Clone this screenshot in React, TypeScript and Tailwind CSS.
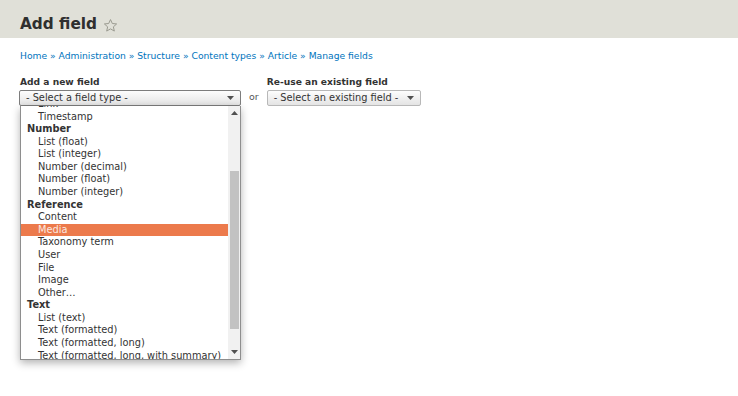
type Item = { label: string; group?: boolean; active?: boolean };

const ITEMS: Item[] = [
  { label: "Link" },
  { label: "Timestamp" },
  { label: "Number", group: true },
  { label: "List (float)" },
  { label: "List (integer)" },
  { label: "Number (decimal)" },
  { label: "Number (float)" },
  { label: "Number (integer)" },
  { label: "Reference", group: true },
  { label: "Content" },
  { label: "Media", active: true },
  { label: "Taxonomy term" },
  { label: "User" },
  { label: "File" },
  { label: "Image" },
  { label: "Other…" },
  { label: "Text", group: true },
  { label: "List (text)" },
  { label: "Text (formatted)" },
  { label: "Text (formatted, long)" },
  { label: "Text (formatted, long, with summary)" },
];

const Caret = ({ up = false }: { up?: boolean }) => (
  <svg width="7" height="4" viewBox="0 0 7 4" className={up ? "rotate-180" : ""}>
    <path d="M0 0h7L3.5 4z" fill="#505050" />
  </svg>
);

const FieldSelect = ({ text, width, focused }: { text: string; width: string; focused?: boolean }) => (
  <div
    className={`flex h-4 items-center justify-between rounded-[2px] border bg-gradient-to-b from-[#fdfdfd] to-[#e4e4e4] pl-[6px] pr-[6px] text-[9.8px] text-[#333] ${width} ${
      focused ? "border-[#7d7d7d]" : "border-[#b8b8b8]"
    }`}
  >
    <span>{text}</span>
    <Caret />
  </div>
);

const App = () => {
  return (
    <div className="h-[396px] w-[738px] overflow-hidden bg-white font-['DejaVu_Sans',sans-serif] text-[#333]">
      <header className="flex h-[38px] items-center gap-[6px] bg-[#e0e0d8] pl-5 pt-[11px]">
        <h1 className="text-[15.3px] font-bold text-[#2f2f2f]">Add field</h1>
        <svg width="15" height="15" viewBox="0 0 24 24" className="mt-[1px]">
          <path
            d="M12 2.5l2.9 6.3 6.9.7-5.2 4.6 1.5 6.8L12 17.4l-6.1 3.5 1.5-6.8-5.2-4.6 6.9-.7z"
            fill="none"
            stroke="#9a9a90"
            strokeWidth="1.6"
            strokeLinejoin="round"
          />
        </svg>
      </header>

      <div className="px-5">
        <nav className="mt-[11px] text-[9.2px] leading-[14px] text-[#0074bd]">
          Home » Administration » Structure » Content types » Article » Manage fields
        </nav>

        <div className="mt-[13px] flex items-end gap-[8px]">
          <div className="relative">
            <div className="mb-[2px] text-[9.15px] font-bold leading-[12px]">Add a new field</div>
            <div className="-ml-px">
              <FieldSelect text="- Select a field type -" width="w-[222px]" focused />
            </div>

            <div className="absolute left-0 top-[30px] h-[254px] w-[221px] overflow-hidden border border-t-0 border-[#8e8e8e] bg-white shadow-[0_3px_8px_rgba(0,0,0,0.3)]">
              <div className="flex h-full">
                <div className="flex-1 overflow-hidden">
                  <div className="-mt-[8px] text-[9.8px] leading-[12.58px] text-[#333]">
                    {ITEMS.map((item) => (
                      <div
                        key={item.label}
                        className={`whitespace-nowrap ${
                          item.group ? "pl-[6px] font-bold" : "pl-[17px]"
                        } ${item.active ? "bg-[#ec7a4c] text-[#fbe9e0]" : ""}`}
                      >
                        {item.label}
                      </div>
                    ))}
                  </div>
                </div>
                <div className="flex w-[12px] flex-col items-center bg-[#f1f1f1]">
                  <div className="flex h-[14px] items-center">
                    <Caret up />
                  </div>
                  <div className="mt-[51px] h-[158px] w-[9px] bg-[#c2c2c2]" />
                  <div className="mt-auto flex h-[14px] items-center">
                    <Caret />
                  </div>
                </div>
              </div>
            </div>
          </div>

          <div className="mb-[3px] text-[9.5px] leading-[12px] text-[#555]">or</div>

          <div>
            <div className="mb-[2px] text-[9.15px] font-bold leading-[12px]">Re-use an existing field</div>
            <FieldSelect text="- Select an existing field -" width="w-[154px]" />
          </div>
        </div>
      </div>
    </div>
  );
};

export default App;
